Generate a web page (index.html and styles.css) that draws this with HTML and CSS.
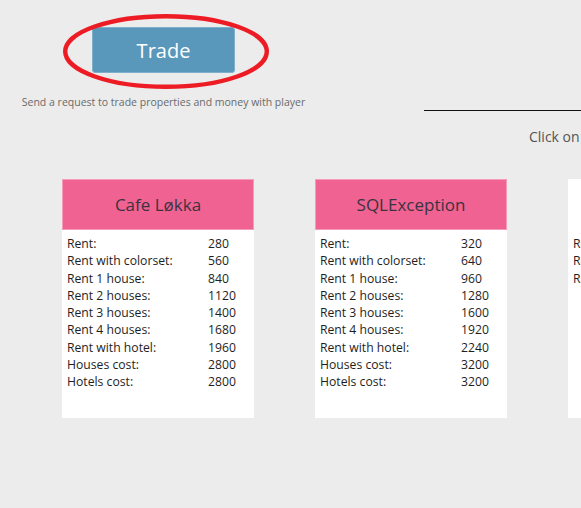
FILE: index.html
```html
<!DOCTYPE html>
<html>
<head>
<meta charset="utf-8">
<link rel="stylesheet" href="styles.css">
</head>
<body>
<div class="page">
  <div class="top">
    <div class="trade-panel">
      <button class="trade-btn">Trade</button>
      <svg class="ring" width="220" height="90" viewBox="0 0 220 90">
        <ellipse cx="103" cy="38.5" rx="100.8" ry="35.3" fill="none" stroke="#ed1c24" stroke-width="4.4"/>
      </svg>
      <p class="hint">Send a request to trade properties and money with player</p>
    </div>
    <div class="info-panel">
      <div class="rule"></div>
      <p class="click">Click on a property to see details</p>
    </div>
  </div>
  <div class="cards">
    <div class="card">
      <div class="card-head pink">Cafe Løkka</div>
      <div class="card-body">
        <div class="row"><span>Rent:</span><span>280</span></div>
        <div class="row"><span>Rent with colorset:</span><span>560</span></div>
        <div class="row"><span>Rent 1 house:</span><span>840</span></div>
        <div class="row"><span>Rent 2 houses:</span><span>1120</span></div>
        <div class="row"><span>Rent 3 houses:</span><span>1400</span></div>
        <div class="row"><span>Rent 4 houses:</span><span>1680</span></div>
        <div class="row"><span>Rent with hotel:</span><span>1960</span></div>
        <div class="row"><span>Houses cost:</span><span>2800</span></div>
        <div class="row"><span>Hotels cost:</span><span>2800</span></div>
      </div>
    </div>
    <div class="card">
      <div class="card-head pink">SQLException</div>
      <div class="card-body">
        <div class="row"><span>Rent:</span><span>320</span></div>
        <div class="row"><span>Rent with colorset:</span><span>640</span></div>
        <div class="row"><span>Rent 1 house:</span><span>960</span></div>
        <div class="row"><span>Rent 2 houses:</span><span>1280</span></div>
        <div class="row"><span>Rent 3 houses:</span><span>1600</span></div>
        <div class="row"><span>Rent 4 houses:</span><span>1920</span></div>
        <div class="row"><span>Rent with hotel:</span><span>2240</span></div>
        <div class="row"><span>Houses cost:</span><span>3200</span></div>
        <div class="row"><span>Hotels cost:</span><span>3200</span></div>
      </div>
    </div>
    <div class="card">
      <div class="card-head plain">Station</div>
      <div class="card-body">
        <div class="row"><span>Rent:</span><span>250</span></div>
        <div class="row"><span>Rent 2 stations:</span><span>500</span></div>
        <div class="row"><span>Rent 3 stations:</span><span>1000</span></div>
      </div>
    </div>
  </div>
</div>
</body>
</html>
```

FILE: styles.css
```css
html, body {
  margin: 0;
  padding: 0;
  background: #ececec;
  overflow: hidden;
}
body {
  width: 581px;
  height: 508px;
  font-family: "Open Sans", "Noto Sans", sans-serif;
  color: #222;
}
.page {
  width: 581px;
  height: 508px;
  overflow: hidden;
}
.top {
  display: flex;
  width: 900px;
  height: 146px;
}
.trade-panel {
  position: relative;
  width: 327px;
  flex: none;
  display: flex;
  flex-direction: column;
  align-items: center;
  padding-top: 27px;
}
.trade-btn {
  width: 143px;
  height: 46px;
  background: #5a98bb;
  border: 1px solid #7eb0cc;
  border-radius: 3px;
  color: #ffffff;
  font-family: "Open Sans", "Noto Sans", sans-serif;
  font-size: 20px;
  padding: 0;
  margin: 0;
}
.ring {
  position: absolute;
  left: 63px;
  top: 13px;
}
.hint {
  margin: 22px 0 0;
  font-size: 10.5px;
  color: #6a6a6a;
  white-space: nowrap;
}
.info-panel {
  flex: none;
  width: 500px;
  padding-left: 97px;
  padding-top: 110px;
}
.rule {
  height: 1px;
  background: #111;
}
.click {
  margin: 16px 0 0 105px;
  font-size: 14px;
  color: #555;
  white-space: nowrap;
}
.cards {
  display: flex;
  gap: 61px;
  padding-left: 62px;
  margin-top: 33px;
  width: 900px;
}
.card {
  flex: none;
  width: 192px;
  height: 239px;
  background: #ffffff;
}
.card-head {
  height: 51px;
  display: flex;
  align-items: center;
  justify-content: center;
  font-size: 17px;
  color: #3b3340;
  box-sizing: border-box;
}
.card-head.pink {
  background: #f06291;
  border: 1px solid #f59ab8;
}
.card-head.plain {
  color: transparent;
}
.card-body {
  padding: 5px 0 0 5px;
}
.row {
  display: grid;
  grid-template-columns: 141px auto;
  font-size: 12.2px;
  line-height: 17.25px;
  color: #1e1e1e;
}
```
